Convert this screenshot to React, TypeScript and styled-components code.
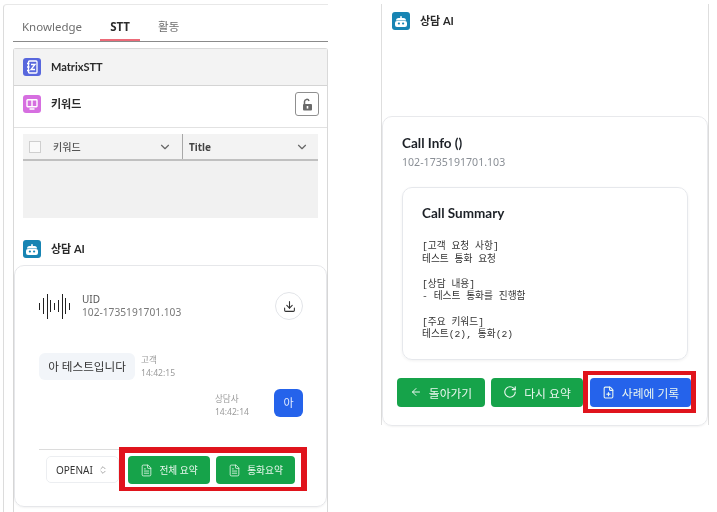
import React from "react";
import styled, { createGlobalStyle } from "styled-components";
import {
  ArrowLeft,
  ChevronDown,
  ChevronsUpDown,
  Download,
  FilePlus,
  FileText,
  RotateCw,
} from "lucide-react";

const GlobalStyle = createGlobalStyle`
  html, body {
    margin: 0;
    padding: 0;
    background: #fff;
    overflow: hidden;
  }
  body {
    font-family: "Noto Sans", "Noto Sans CJK KR", sans-serif;
    color: #1f2328;
  }
`;

const waveHeights = [7, 16, 25, 12, 7, 12, 25, 16, 7];

const TileBook = () => (
  <svg width="12" height="12" viewBox="0 0 12 12" fill="none" stroke="#fff" strokeWidth="1.4">
    <rect x="1" y="1.700" width="10" height="7" rx="0.600" />
    <path d="M6 1.700v7M3.500 11h5" />
  </svg>
);

const TileNote = () => (
  <svg width="13" height="14" viewBox="0 0 13 14" fill="none" stroke="#fff" strokeWidth="1.3">
    <rect x="2.500" y="1" width="8.500" height="12" rx="1" />
    <path d="M1 3.500h2.500M1 7h2.500M1 10.500h2.500M5 4.500h4L5 9.500h4" />
  </svg>
);

const TileBot = () => (
  <svg width="12" height="11" viewBox="0 0 12 11" fill="#fff">
    <rect x="5.200" y="0" width="1.600" height="3" rx="0.800" />
    <path d="M3.500 2h5A2.500 2.500 0 0 1 11 4.500H1A2.500 2.500 0 0 1 3.500 2z" />
    <rect x="0" y="5" width="12" height="6" rx="2" />
    <rect x="2.800" y="6.500" width="2.200" height="2" rx="1" fill="#1784b3" />
    <rect x="7" y="6.500" width="2.200" height="2" rx="1" fill="#1784b3" />
  </svg>
);

const LockIcon = () => (
  <svg width="11" height="13" viewBox="0 0 11 13">
    <path d="M2.500 6.500V3.600a2.300 2.300 0 0 1 4.500-.6" fill="none" stroke="#6a6a6a" strokeWidth="1.500" />
    <rect x="1" y="6" width="9" height="6.500" rx="1" fill="#6a6a6a" />
    <rect x="4.700" y="8" width="1.600" height="2.600" fill="#fff" />
  </svg>
);

const App = () => (
  <>
    <GlobalStyle />
    <Page>
      <LeftPanel>
        <Tabs>
          <Tab>Knowledge</Tab>
          <Tab $active>STT</Tab>
          <Tab>활동</Tab>
        </Tabs>
        <Section>
          <MatrixHeader>
            <Tile $color="#5867dd"><TileNote /></Tile>
            <SectionTitle>MatrixSTT</SectionTitle>
          </MatrixHeader>
          <KeywordHeader>
            <Tile $color="#d66fe0"><TileBook /></Tile>
            <SectionTitle>키워드</SectionTitle>
            <LockButton><LockIcon /></LockButton>
          </KeywordHeader>
          <Table>
            <TableHead>
              <KeywordColumn>
                <Check />
                <ColumnLabel $muted>키워드</ColumnLabel>
                <ChevronDown size={14} color="#666" />
              </KeywordColumn>
              <TitleColumn>
                <ColumnLabel>Title</ColumnLabel>
                <ChevronDown size={14} color="#666" />
              </TitleColumn>
            </TableHead>
            <TableBody />
          </Table>
          <AiTitle>
            <Tile $color="#1784b3"><TileBot /></Tile>
            <SectionTitle>상담 AI</SectionTitle>
          </AiTitle>
          <ChatCard>
            <UidRow>
              <Wave>
                {waveHeights.map((h, i) => (
                  <WaveBar key={i} style={{ height: h }} />
                ))}
              </Wave>
              <UidText>
                <UidLabel>UID</UidLabel>
                <UidValue>102-1735191701.103</UidValue>
              </UidText>
              <RoundButton><Download size={13} color="#333" /></RoundButton>
            </UidRow>
            <CustomerRow>
              <Bubble>아 테스트입니다</Bubble>
              <Meta $top={1}>
                <div>고객</div>
                <div>14:42:15</div>
              </Meta>
            </CustomerRow>
            <AgentRow>
              <Meta $top={4}>
                <div>상담사</div>
                <div>14:42:14</div>
              </Meta>
              <AgentBubble>아</AgentBubble>
            </AgentRow>
            <ChatFooter>
              <ModelSelect>
                OPENAI
                <ChevronsUpDown size={10} color="#999" />
              </ModelSelect>
              <RedBox>
                <ActionButton $width={82}><FileText size={13} strokeWidth={1.5} />전체 요약</ActionButton>
                <ActionButton $width={79}><FileText size={13} strokeWidth={1.5} />통화요약</ActionButton>
              </RedBox>
            </ChatFooter>
          </ChatCard>
        </Section>
      </LeftPanel>
      <RightPanel>
        <RightTitle>
          <Tile $color="#1784b3"><TileBot /></Tile>
          <SectionTitle>상담 AI</SectionTitle>
        </RightTitle>
        <InfoCard>
          <InfoTitle>Call Info ()</InfoTitle>
          <InfoId>102-1735191701.103</InfoId>
          <SummaryCard>
            <SummaryTitle>Call Summary</SummaryTitle>
            <SummaryText>{`[고객 요청 사항]
테스트 통화 요청

[상담 내용]
- 테스트 통화를 진행함

[주요 키워드]
테스트(2), 통화(2)`}</SummaryText>
          </SummaryCard>
          <InfoActions>
            <BigButton $width={88}><ArrowLeft size={12} />돌아가기</BigButton>
            <BigButton $width={92}><RotateCw size={14} />다시 요약</BigButton>
            <RedBoxTight>
              <BigButton $width={101} $blue><FilePlus size={13} />사례에 기록</BigButton>
            </RedBoxTight>
          </InfoActions>
        </InfoCard>
      </RightPanel>
    </Page>
  </>
);

const Page = styled.div`
  display: flex;
  width: 717px;
  height: 512px;
  overflow: hidden;
  align-items: flex-start;
  filter: blur(0.3px);
`;

const LeftPanel = styled.div`
  box-sizing: border-box;
  width: 325px;
  height: 508px;
  margin: 4px 0 0 3px;
  padding-left: 9px;
  border-left: 1px solid #dcdcdc;
  border-top: 1px solid #e8e8e8;
  border-top-left-radius: 4px;
`;

const Tabs = styled.div`
  display: flex;
  box-sizing: border-box;
  height: 37px;
  padding-left: 9px;
  gap: 18px;
  border-bottom: 1px solid #8a8a8a;
`;

const Tab = styled.div<{ $active?: boolean }>`
  box-sizing: border-box;
  height: 36px;
  min-width: ${(p) => (p.$active ? "40px" : "0")};
  padding-top: 14px;
  font-size: 11.5px;
  line-height: 16px;
  text-align: center;
  font-weight: ${(p) => (p.$active ? 700 : 400)};
  color: ${(p) => (p.$active ? "#2b2b2b" : "#6f6f6f")};
  border-bottom: ${(p) => (p.$active ? "2px solid #ec6a78" : "none")};
`;

const Section = styled.div`
  box-sizing: border-box;
  height: 470px;
  margin-top: 6px;
  border: 1px solid #d9d9d9;
  border-bottom: none;
  border-radius: 3px 3px 0 0;
`;

const MatrixHeader = styled.div`
  display: flex;
  align-items: center;
  gap: 10px;
  height: 36px;
  padding-left: 9px;
  background: #f3f3f3;
  border-bottom: 1px solid #d4d4d4;
`;

const KeywordHeader = styled.div`
  display: flex;
  align-items: center;
  gap: 10px;
  box-sizing: border-box;
  height: 42px;
  padding: 0 8px 5px 9px;
  border-bottom: 1px solid #e2e2e2;
`;

const Tile = styled.span<{ $color: string }>`
  display: flex;
  align-items: center;
  justify-content: center;
  width: 18px;
  height: 18px;
  flex: none;
  border-radius: 3px;
  background: ${(p) => p.$color};
`;

const SectionTitle = styled.span`
  font-family: Lato, "Noto Sans CJK KR", sans-serif;
  font-size: 11px;
  line-height: 16px;
  font-weight: 700;
  color: #2a2a2a;
`;

const LockButton = styled.div`
  display: flex;
  align-items: center;
  justify-content: center;
  box-sizing: border-box;
  width: 24px;
  height: 24px;
  margin-left: auto;
  border: 1px solid #8f8f8f;
  border-radius: 3px;
`;

const Table = styled.div`
  margin: 6px 9px 0;
`;

const TableHead = styled.div`
  display: flex;
  box-sizing: border-box;
  height: 27px;
  background: #f3f3f3;
  border-bottom: 2px solid #c0c0c0;
`;

const KeywordColumn = styled.div`
  display: flex;
  align-items: center;
  box-sizing: border-box;
  width: 160px;
  padding: 0 10px 0 6px;
  border-right: 1px solid #a8a8a8;
`;

const TitleColumn = styled.div`
  display: flex;
  flex: 1;
  align-items: center;
  justify-content: space-between;
  padding: 0 9px 0 6px;
`;

const Check = styled.span`
  box-sizing: border-box;
  width: 12px;
  height: 12px;
  margin-right: 12px;
  background: #fafafa;
  border: 1px solid #cfcfcf;
`;

const ColumnLabel = styled.span<{ $muted?: boolean }>`
  flex: 1;
  font-size: 10px;
  font-weight: ${(p) => (p.$muted ? 500 : 700)};
  color: ${(p) => (p.$muted ? "#555" : "#444")};
`;

const TableBody = styled.div`
  height: 57px;
  background: #f1f1f1;
`;

const AiTitle = styled.div`
  display: flex;
  align-items: center;
  gap: 10px;
  height: 18px;
  margin-top: 22px;
  padding-left: 9px;
`;

const ChatCard = styled.div`
  box-sizing: border-box;
  height: 242px;
  margin-top: 7px;
  padding: 26px 23px 0 24px;
  border: 1px solid #e6e7ea;
  border-radius: 10px;
  box-shadow: 0 1px 2px rgba(0, 0, 0, 0.05);
`;

const UidRow = styled.div`
  display: flex;
  align-items: center;
  height: 28px;
`;

const Wave = styled.div`
  display: flex;
  align-items: center;
  justify-content: space-between;
  width: 31px;
  margin-right: 12px;
`;

const WaveBar = styled.span`
  width: 1px;
  background: #222;
`;

const UidText = styled.div`
  flex: 1;
`;

const UidLabel = styled.div`
  font-size: 10px;
  line-height: 13px;
  color: #555;
`;

const UidValue = styled.div`
  font-size: 10.2px;
  line-height: 13px;
  color: #777;
`;

const RoundButton = styled.div`
  display: flex;
  align-items: center;
  justify-content: center;
  box-sizing: border-box;
  width: 28px;
  height: 28px;
  border: 1px solid #e2e4e8;
  border-radius: 50%;
`;

const CustomerRow = styled.div`
  display: flex;
  gap: 6px;
  margin-top: 33px;
`;

const Bubble = styled.div`
  box-sizing: border-box;
  width: 96px;
  height: 27px;
  font-size: 11.6px;
  line-height: 27px;
  text-align: center;
  color: #333;
  background: #f2f5f9;
  border-radius: 6px;
`;

const Meta = styled.div<{ $top: number }>`
  padding-top: ${(p) => p.$top}px;
  font-size: 8.6px;
  line-height: 13px;
  color: #9a9a9a;
`;

const AgentRow = styled.div`
  display: flex;
  justify-content: flex-end;
  gap: 25px;
  margin-top: 9px;
`;

const AgentBubble = styled.div`
  width: 29px;
  height: 28px;
  font-size: 11px;
  line-height: 28px;
  text-align: center;
  color: #e8efff;
  background: #2563eb;
  border-radius: 6px;
`;

const ChatFooter = styled.div`
  display: flex;
  align-items: flex-start;
  justify-content: space-between;
  box-sizing: border-box;
  height: 45px;
  margin: 30px -4px 0 0;
  padding-left: 7px;
  border-top: 1px solid #dcdcdc;
`;

const ModelSelect = styled.div`
  display: flex;
  align-items: center;
  justify-content: space-between;
  box-sizing: border-box;
  width: 74px;
  height: 27px;
  margin-top: 6px;
  padding: 0 10px 0 9px;
  font-size: 10px;
  color: #333;
  border: 1px solid #eceef1;
  border-radius: 5px;
`;

const RedBox = styled.div`
  display: flex;
  gap: 6px;
  box-sizing: border-box;
  height: 44px;
  padding: 3px 6px 0 3px;
  margin-top: -3px;
  background: #fff;
  border-style: solid;
  border-color: #e0141c;
  border-width: 6px 6px 4px;
`;

const ActionButton = styled.div<{ $width: number }>`
  display: flex;
  align-items: center;
  justify-content: center;
  gap: 6px;
  box-sizing: border-box;
  width: ${(p) => p.$width}px;
  height: 28px;
  font-size: 9.7px;
  color: #e9f7ee;
  background: #16a34a;
  border-radius: 4px;
`;

const RightPanel = styled.div`
  box-sizing: border-box;
  width: 328px;
  height: 421px;
  margin: 4px 0 0 53px;
  padding-top: 8px;
  border-left: 1px solid #dedede;
  border-right: 1px solid #dedede;
`;

const RightTitle = styled.div`
  display: flex;
  align-items: center;
  gap: 10px;
  height: 18px;
  padding-left: 10px;
`;

const InfoCard = styled.div`
  box-sizing: border-box;
  height: 310px;
  margin-top: 86px;
  padding: 17px 19px 0 19px;
  border: 1px solid #e8e9ec;
  border-radius: 10px;
  box-shadow: 0 1px 2px rgba(0, 0, 0, 0.05);
`;

const InfoTitle = styled.div`
  font-family: Lato, "Noto Sans CJK KR", sans-serif;
  font-size: 13.5px;
  line-height: 18px;
  font-weight: 700;
  color: #1c2026;
`;

const InfoId = styled.div`
  margin-top: 3px;
  font-size: 10.6px;
  line-height: 14px;
  color: #8a8f96;
`;

const SummaryCard = styled.div`
  box-sizing: border-box;
  height: 173px;
  margin-top: 18px;
  padding: 16px 19px;
  border: 1px solid #e6e8ec;
  border-radius: 10px;
  box-shadow: 0 1px 3px rgba(0, 0, 0, 0.06);
`;

const SummaryTitle = styled.div`
  font-family: Lato, "Noto Sans CJK KR", sans-serif;
  font-size: 13.5px;
  line-height: 18px;
  font-weight: 700;
  color: #1c2026;
`;

const SummaryText = styled.pre`
  margin: 19px 0 0;
  font-family: "Liberation Mono", "Noto Sans CJK KR", monospace;
  font-size: 9.7px;
  line-height: 12.6px;
  color: #333;
`;

const InfoActions = styled.div`
  display: flex;
  align-items: center;
  gap: 6px;
  margin: 11px -8px 0 -5px;
`;

const BigButton = styled.div<{ $width: number; $blue?: boolean }>`
  display: flex;
  align-items: center;
  justify-content: center;
  gap: 7px;
  box-sizing: border-box;
  flex: none;
  width: ${(p) => p.$width}px;
  height: 29px;
  font-size: 11.8px;
  color: #eaf6ef;
  background: ${(p) => (p.$blue ? "#2563eb" : "#16a34a")};
  border-radius: 4px;
`;

const RedBoxTight = styled.div`
  box-sizing: border-box;
  margin-left: -6px;
  padding: 3px 0 2px 2px;
  background: #fff;
  border-style: solid;
  border-color: #e0141c;
  border-width: 4px 5px;
`;

export default App;
